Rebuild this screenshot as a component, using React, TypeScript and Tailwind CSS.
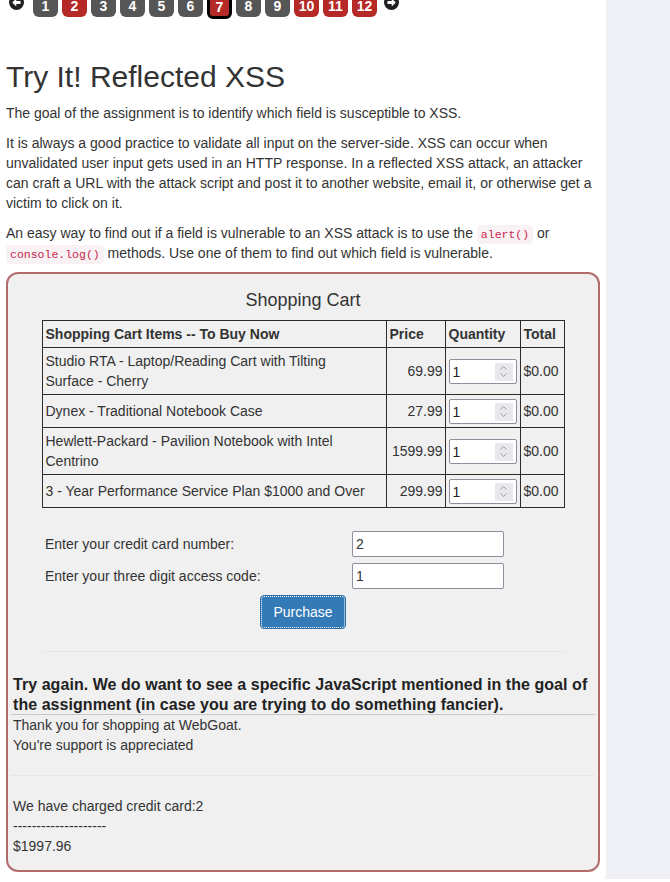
import React from 'react'

const pages = [
  { n: 1, red: false },
  { n: 2, red: true },
  { n: 3, red: false },
  { n: 4, red: false },
  { n: 5, red: false },
  { n: 6, red: false },
  { n: 7, red: true, active: true },
  { n: 8, red: false },
  { n: 9, red: false },
  { n: 10, red: true },
  { n: 11, red: true },
  { n: 12, red: true },
]

const items = [
  { name: 'Studio RTA - Laptop/Reading Cart with Tilting Surface - Cherry', price: '69.99' },
  { name: 'Dynex - Traditional Notebook Case', price: '27.99' },
  { name: 'Hewlett-Packard - Pavilion Notebook with Intel Centrino', price: '1599.99' },
  { name: '3 - Year Performance Service Plan $1000 and Over', price: '299.99' },
]

const CircleArrow = ({ dir }: { dir: 'left' | 'right' }) => (
  <svg width="15" height="15" viewBox="0 0 14 14" className="mt-[1px] shrink-0">
    <circle cx="7" cy="7" r="7" fill="#1f1f1f" />
    {dir === 'left' ? (
      <path d="M3 7 L6.8 3.3 V5.5 H10.8 V8.5 H6.8 V10.7 Z" fill="#fff" />
    ) : (
      <path d="M11 7 L7.2 3.3 V5.5 H3.2 V8.5 H7.2 V10.7 Z" fill="#fff" />
    )}
  </svg>
)

const Code = ({ children }: { children: React.ReactNode }) => (
  <code className="rounded-[4px] bg-[#f9f2f4] px-[4px] py-[3px] font-['Liberation_Mono',monospace] text-[11.5px] leading-none text-[#c7254e]">
    {children}
  </code>
)

const QtyInput = () => (
  <div className="flex h-[25px] w-[68px] items-center justify-between rounded-[2px] border border-[#8f8f9d] bg-white pl-[3px] pr-[3px]">
    <span className="text-[14px] text-[#222]">1</span>
    <span className="flex h-[18px] w-[18px] items-center justify-center bg-[#e9e9ed]">
      <svg width="9" height="13" viewBox="0 0 9 13">
        <polyline points="1.5,4.5 4.5,1.5 7.5,4.5" fill="none" stroke="#9a9aa3" strokeWidth="1" />
        <polyline points="1.5,8.5 4.5,11.5 7.5,8.5" fill="none" stroke="#9a9aa3" strokeWidth="1" />
      </svg>
    </span>
  </div>
)

export default function App() {
  return (
    <div className="min-h-screen bg-[#eff0f5] font-['Liberation_Sans',Arial,sans-serif] text-[14px] leading-[20px] text-[#333]">
      <div className="w-[606px] rounded-br-[4px] bg-white px-[6px] pb-[7px]">
        {/* page links */}
        <div className="-mt-[6px] flex items-start pl-[3px]">
          <CircleArrow dir="left" />
          <div className="ml-[9px] flex gap-[4px]">
            {pages.map((p) => (
              <div
                key={p.n}
                className={`flex w-[25px] items-center justify-center rounded-[6px] text-[14px] font-bold text-white ${
                  p.red ? 'bg-[#b52a27]' : 'bg-[#565656]'
                } ${p.active ? 'h-[25px] border-[3px] border-black' : 'h-[23px]'}`}
              >
                {p.n}
              </div>
            ))}
          </div>
          <div className="ml-[7px]">
            <CircleArrow dir="right" />
          </div>
        </div>

        <h2 className="mb-[10px] mt-[41px] text-[30px] leading-[33px] font-normal text-[#333]">Try It! Reflected XSS</h2>
        <p className="mb-[10px]">The goal of the assignment is to identify which field is susceptible to XSS.</p>
        <p className="mb-[10px]">
          It is always a good practice to validate all input on the server-side. XSS can occur when unvalidated user input
          gets used in an HTTP response. In a reflected XSS attack, an attacker can craft a URL with the attack script and
          post it to another website, email it, or otherwise get a victim to click on it.
        </p>
        <p className="mb-[9px]">
          An easy way to find out if a field is vulnerable to an XSS attack is to use the <Code>alert()</Code> or{' '}
          <Code>console.log()</Code> methods. Use one of them to find out which field is vulnerable.
        </p>

        {/* attack container */}
        <div className="rounded-[12px] border-2 border-[#b36a6a] bg-[#f0f0f0] px-[3px] pb-[14px] pt-[15px]">
          <div className="text-center text-[18px] leading-[22px]">Shopping Cart</div>

          <table className="mx-auto mt-[9px] w-[522px] table-fixed border-collapse">
            <colgroup>
              <col className="w-[344px]" />
              <col className="w-[59px]" />
              <col className="w-[75px]" />
              <col className="w-[44px]" />
            </colgroup>
            <thead>
              <tr className="font-bold">
                <th className="border border-[#2b2b2b] px-[3px] py-[3px] text-left">Shopping Cart Items -- To Buy Now</th>
                <th className="border border-[#2b2b2b] px-[3px] py-[3px] text-left">Price</th>
                <th className="border border-[#2b2b2b] px-[3px] py-[3px] text-left">Quantity</th>
                <th className="border border-[#2b2b2b] px-[3px] py-[3px] text-left">Total</th>
              </tr>
            </thead>
            <tbody>
              {items.map((it) => (
                <tr key={it.name}>
                  <td className="border border-[#2b2b2b] py-[3px] pl-[3px] pr-[8px]">{it.name}</td>
                  <td className="border border-[#2b2b2b] px-[2px] text-right">{it.price}</td>
                  <td className="border border-[#2b2b2b] pb-[3px] pl-[3px] pt-[4px]">
                    <QtyInput />
                  </td>
                  <td className="border border-[#2b2b2b] px-[3px]">$0.00</td>
                </tr>
              ))}
            </tbody>
          </table>

          <div className="mx-auto mt-[23px] flex w-[522px] flex-col gap-[6px] pl-[3px]">
            <div className="flex items-center">
              <span className="w-[307px]">Enter your credit card number:</span>
              <div className="flex h-[26px] w-[152px] items-center rounded-[2px] border border-[#8f8f9d] bg-white px-[3px]">2</div>
            </div>
            <div className="flex items-center">
              <span className="w-[307px]">Enter your three digit access code:</span>
              <div className="flex h-[26px] w-[152px] items-center rounded-[2px] border border-[#8f8f9d] bg-white px-[3px]">1</div>
            </div>
          </div>
          <div className="mt-[6px] flex justify-center">
            <button className="h-[34px] w-[86px] rounded-[4px] border border-[#2e6da4] bg-[#337ab7] text-[14px] text-white outline-1 outline-offset-[-2px] outline-dotted outline-white">
              Purchase
            </button>
          </div>

          <div className="mx-auto mt-[22px] h-px w-[522px] bg-[#e6e6e6]" />

          <div className="mt-[23px]">
            <div className="border-b border-[#c8c8c8] pl-[2px] text-[16px] font-bold leading-[19.5px] tracking-[0.05px] text-[#222]">
              Try again. We do want to see a specific JavaScript mentioned in the goal of the assignment (in case you are
              trying to do something fancier).
            </div>
            <div className="pl-[2px]">
              <p>Thank you for shopping at WebGoat.</p>
              <p>You're support is appreciated</p>
            </div>
            <div className="mt-[20px] h-px bg-[#e6e6e6]" />
            <div className="mt-[20px] pl-[2px]">
              <p>We have charged credit card:2</p>
              <p>--------------------</p>
              <p>$1997.96</p>
            </div>
          </div>
        </div>
      </div>
    </div>
  )
}
